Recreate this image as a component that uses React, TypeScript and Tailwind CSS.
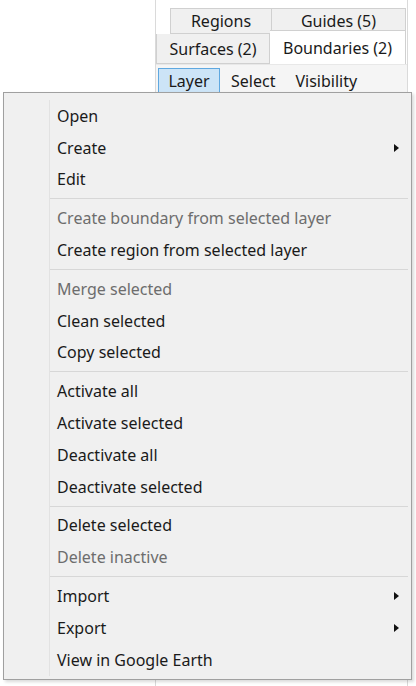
const FONT = { fontFamily: '"Noto Sans", "Open Sans", sans-serif' };

type Entry = { label: string; disabled?: boolean; sub?: boolean } | "sep";

const items: Entry[] = [
  { label: "Open" },
  { label: "Create", sub: true },
  { label: "Edit" },
  "sep",
  { label: "Create boundary from selected layer", disabled: true },
  { label: "Create region from selected layer" },
  "sep",
  { label: "Merge selected", disabled: true },
  { label: "Clean selected" },
  { label: "Copy selected" },
  "sep",
  { label: "Activate all" },
  { label: "Activate selected" },
  { label: "Deactivate all" },
  { label: "Deactivate selected" },
  "sep",
  { label: "Delete selected" },
  { label: "Delete inactive", disabled: true },
  "sep",
  { label: "Import", sub: true },
  { label: "Export", sub: true },
  { label: "View in Google Earth" },
];

function Arrow() {
  return (
    <svg width="5" height="8" viewBox="0 0 5 8" className="shrink-0">
      <path d="M0 0 L5 4 L0 8 Z" fill="#111" />
    </svg>
  );
}

function Tab({ children, active, className }: { children: React.ReactNode; active?: boolean; className: string }) {
  return (
    <div
      className={
        active
          ? `flex items-center justify-center border border-b-0 border-[#d0d0d0] bg-white text-[16px] text-[#1a1a1a] ${className}`
          : `flex items-center justify-center border border-[#d0d0d0] bg-[#f0f0f0] text-[16px] text-[#1a1a1a] ${className}`
      }
    >
      {children}
    </div>
  );
}

export default function App() {
  return (
    <div className="relative h-[686px] w-[416px] overflow-hidden bg-white" style={FONT}>
      <div className="ml-[155px] flex h-full w-[253px] flex-col border-x border-[#dadada] bg-white">
        <div className="mt-[8px] flex pl-[14px]">
          <Tab className="h-[26px] w-[102px]">Regions</Tab>
          <Tab className="h-[26px] w-[134px] border-l-0">Guides (5)</Tab>
        </div>
        <div className="flex items-end">
          <Tab className="h-[30px] w-[114px] border-t-0">Surfaces (2)</Tab>
          <Tab active className="-mt-[4px] h-[34px] w-[136px] border-l-0">Boundaries (2)</Tab>
        </div>
        <div className="flex h-[30px] items-center border-t border-[#e8e8e8] bg-[#f5f5f5] pl-[2px] pt-[2px] text-[16px] text-[#1a1a1a]">
          <div className="flex h-[25px] w-[62px] items-center justify-center border border-[#5fa8e0] bg-[#cce4f7]">Layer</div>
          <div className="ml-[11px]">Select</div>
          <div className="ml-[20px]">Visibility</div>
        </div>
      </div>

      <div className="absolute left-[3px] top-[92px] w-[409px] border border-[#a0a0a0] bg-[#f0f0f0] pb-[3px] pt-[7px] shadow-[2px_2px_3px_rgba(0,0,0,0.15)]">
        <div className="relative">
          <div className="absolute bottom-0 left-[45px] top-0 w-px bg-[#e2e2e2]" />
          {items.map((it, i) =>
            it === "sep" ? (
              <div key={i} className="flex h-[7px] items-center pl-[46px] pr-[3px]">
                <div className="h-px w-full bg-[#d7d7d7]" />
              </div>
            ) : (
              <div
                key={i}
                className={`flex h-[31.8px] items-center pl-[53px] pr-[12px] text-[16px] ${
                  it.disabled ? "text-[#6d6d6d]" : "text-[#1a1a1a]"
                }`}
              >
                <span className="flex-1">{it.label}</span>
                {it.sub && <Arrow />}
              </div>
            )
          )}
        </div>
      </div>
    </div>
  );
}
